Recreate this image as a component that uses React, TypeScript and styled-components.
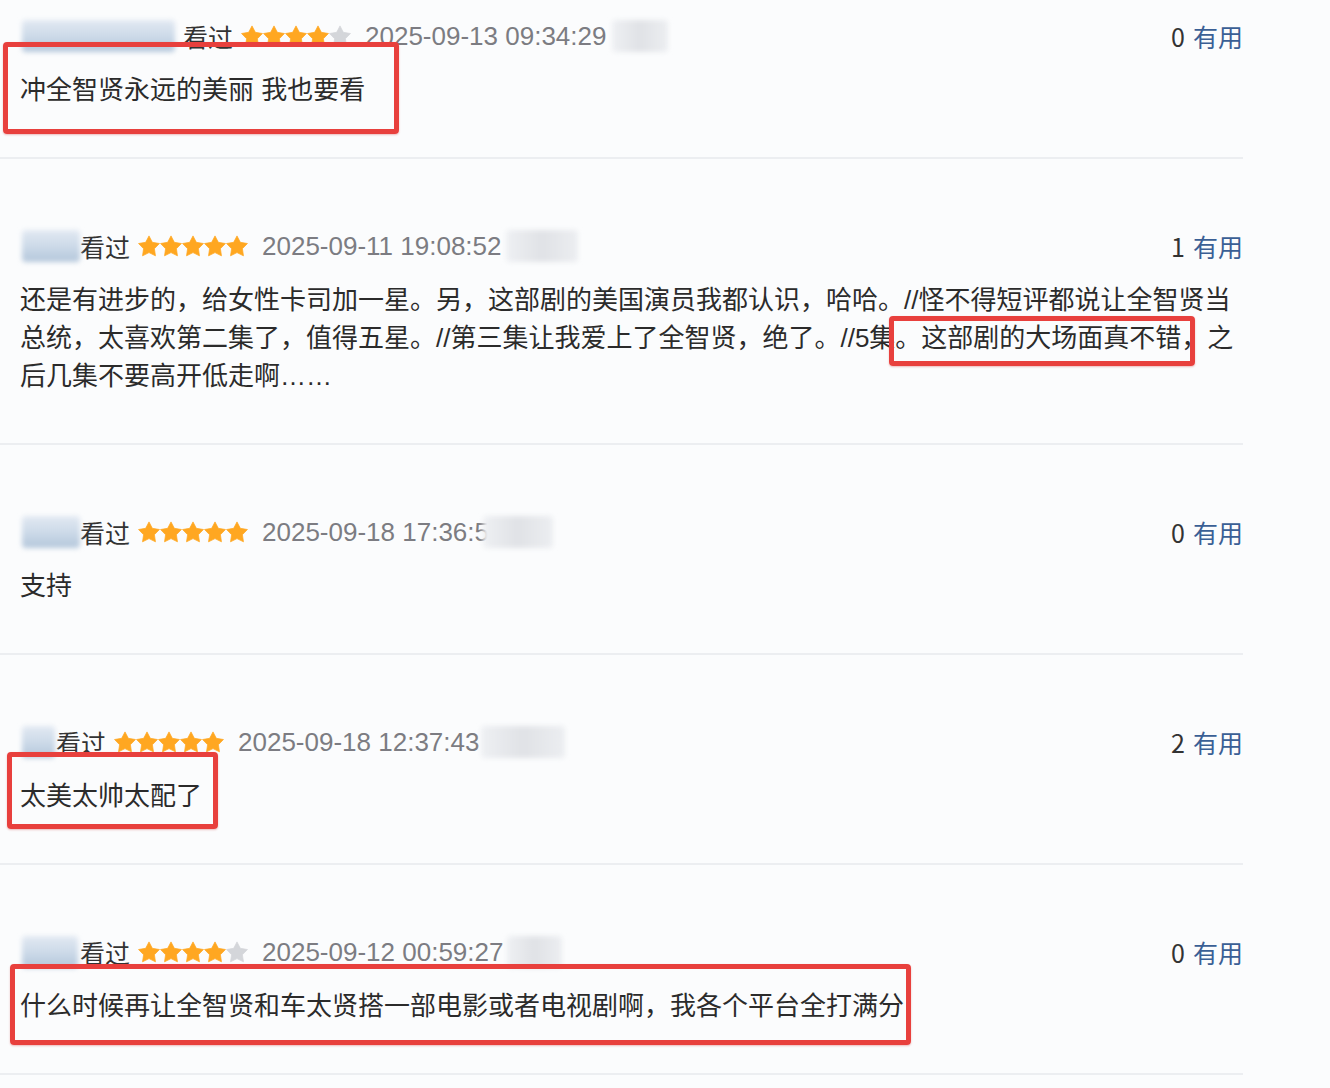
import styled, { createGlobalStyle } from 'styled-components'

const GlobalStyle = createGlobalStyle`
  html, body {
    margin: 0;
    padding: 0;
    background: #fbfcfd;
  }
  body {
    font-family: "Noto Sans CJK SC", "Noto Sans", sans-serif;
    color: #2b2b2b;
  }
`

const Page = styled.div`
  width: 1330px;
  height: 1088px;
  overflow: hidden;
  background: #fbfcfd;
`

const List = styled.div`
  width: 1243px;
`

const Item = styled.div<{ $top: number }>`
  position: relative;
  padding: ${(p) => p.$top}px 0 48px 20px;
  border-bottom: 2px solid #eceef1;
`

const Header = styled.div`
  display: flex;
  align-items: center;
  justify-content: space-between;
  height: 36px;
  margin-left: 2px;
`

const Meta = styled.div`
  display: flex;
  align-items: center;
  height: 36px;
`

const Blur = styled.span<{ $w: number; $tone: 'blue' | 'gray'; $ml?: number; $mr?: number }>`
  display: inline-block;
  width: ${(p) => p.$w}px;
  height: 32px;
  margin-left: ${(p) => p.$ml ?? 0}px;
  margin-right: ${(p) => p.$mr ?? 0}px;
  border-radius: 4px;
  filter: blur(2.5px);
  background: ${(p) =>
    p.$tone === 'blue'
      ? 'linear-gradient(180deg, #e2e9f2 0%, #cfdcea 45%, #b4c7db 100%)'
      : 'linear-gradient(90deg, #eef0f3 0%, #e0e2e6 50%, #eceef1 100%)'};
`

const Watched = styled.span`
  font-size: 25px;
  line-height: 36px;
  color: #333;
`

const Stars = styled.span`
  display: inline-flex;
  margin-left: 8px;
`

const DateText = styled.span`
  margin-left: 14px;
  font-family: "Liberation Sans", "Noto Sans", sans-serif;
  font-size: 26px;
  color: #7c7c82;
`

const Useful = styled.span`
  font-size: 25px;
  color: #333;

  span {
    margin-left: 8px;
    color: #3a5f95;
  }
`

const Content = styled.p`
  margin: 17px 0 0;
  font-family: "Liberation Sans", "Noto Sans CJK SC", sans-serif;
  font-size: 26px;
  line-height: 38px;
  color: #2b2b2b;
`

const Line = styled.span`
  display: block;
  white-space: nowrap;
`

const Highlight = styled.div`
  position: absolute;
  border: 5px solid #e8403d;
  border-radius: 4px;
  box-shadow: 0 1px 2px rgba(200, 40, 40, 0.3);
  pointer-events: none;
`

const Star = ({ on }: { on: boolean }) => (
  <svg width="22" height="22" viewBox="0 0 24 23">
    <path
      d="M12 0.5L15.64 7.48L23.41 8.79L17.9 14.42L19.05 22.21L12 18.7L4.95 22.21L6.1 14.42L0.59 8.79L8.36 7.48Z"
      fill={on ? '#ffa721' : '#d4d6da'}
      stroke={on ? '#ffa721' : '#d4d6da'}
      strokeWidth="0.8"
      strokeLinejoin="round"
    />
  </svg>
)

type Box = { top: number; left: number; width: number; height: number }

type Comment = {
  top: number
  nameW: number
  nameGap: number
  rating: number
  date: string
  tailW: number
  tailGap: number
  useful: number
  lines: string[]
  box?: Box
}

const comments: Comment[] = [
  {
    top: 18,
    nameW: 153,
    nameGap: 8,
    rating: 4,
    date: '2025-09-13 09:34:29',
    tailW: 56,
    tailGap: 6,
    useful: 0,
    lines: ['冲全智贤永远的美丽 我也要看'],
    box: { top: 42, left: 3, width: 396, height: 92 },
  },
  {
    top: 69,
    nameW: 58,
    nameGap: 0,
    rating: 5,
    date: '2025-09-11 19:08:52',
    tailW: 72,
    tailGap: 4,
    useful: 1,
    lines: [
      '还是有进步的，给女性卡司加一星。另，这部剧的美国演员我都认识，哈哈。//怪不得短评都说让全智贤当',
      '总统，太喜欢第二集了，值得五星。//第三集让我爱上了全智贤，绝了。//5集。这部剧的大场面真不错，之',
      '后几集不要高开低走啊……',
    ],
    box: { top: 157, left: 889, width: 306, height: 50 },
  },
  {
    top: 69,
    nameW: 58,
    nameGap: 0,
    rating: 5,
    date: '2025-09-18 17:36:5',
    tailW: 70,
    tailGap: -6,
    useful: 0,
    lines: ['支持'],
  },
  {
    top: 69,
    nameW: 33,
    nameGap: 1,
    rating: 5,
    date: '2025-09-18 12:37:43',
    tailW: 84,
    tailGap: 2,
    useful: 2,
    lines: ['太美太帅太配了'],
    box: { top: 97, left: 7, width: 211, height: 77 },
  },
  {
    top: 69,
    nameW: 56,
    nameGap: 2,
    rating: 4,
    date: '2025-09-12 00:59:27',
    tailW: 55,
    tailGap: 4,
    useful: 0,
    lines: ['什么时候再让全智贤和车太贤搭一部电影或者电视剧啊，我各个平台全打满分'],
    box: { top: 99, left: 10, width: 901, height: 81 },
  },
]

export default function App() {
  return (
    <>
      <GlobalStyle />
      <Page>
        <List>
          {comments.map((c, i) => (
            <Item key={i} $top={c.top}>
              <Header>
                <Meta>
                  <Blur $w={c.nameW} $tone="blue" $mr={c.nameGap} />
                  <Watched>看过</Watched>
                  <Stars>
                    {[0, 1, 2, 3, 4].map((s) => (
                      <Star key={s} on={s < c.rating} />
                    ))}
                  </Stars>
                  <DateText>{c.date}</DateText>
                  <Blur $w={c.tailW} $tone="gray" $ml={c.tailGap} />
                </Meta>
                <Useful>
                  {c.useful}
                  <span>有用</span>
                </Useful>
              </Header>
              <Content>
                {c.lines.map((l, j) => (
                  <Line key={j}>{l}</Line>
                ))}
              </Content>
              {c.box && (
                <Highlight
                  style={{
                    top: c.box.top,
                    left: c.box.left,
                    width: c.box.width - 10,
                    height: c.box.height - 10,
                  }}
                />
              )}
            </Item>
          ))}
        </List>
      </Page>
    </>
  )
}
